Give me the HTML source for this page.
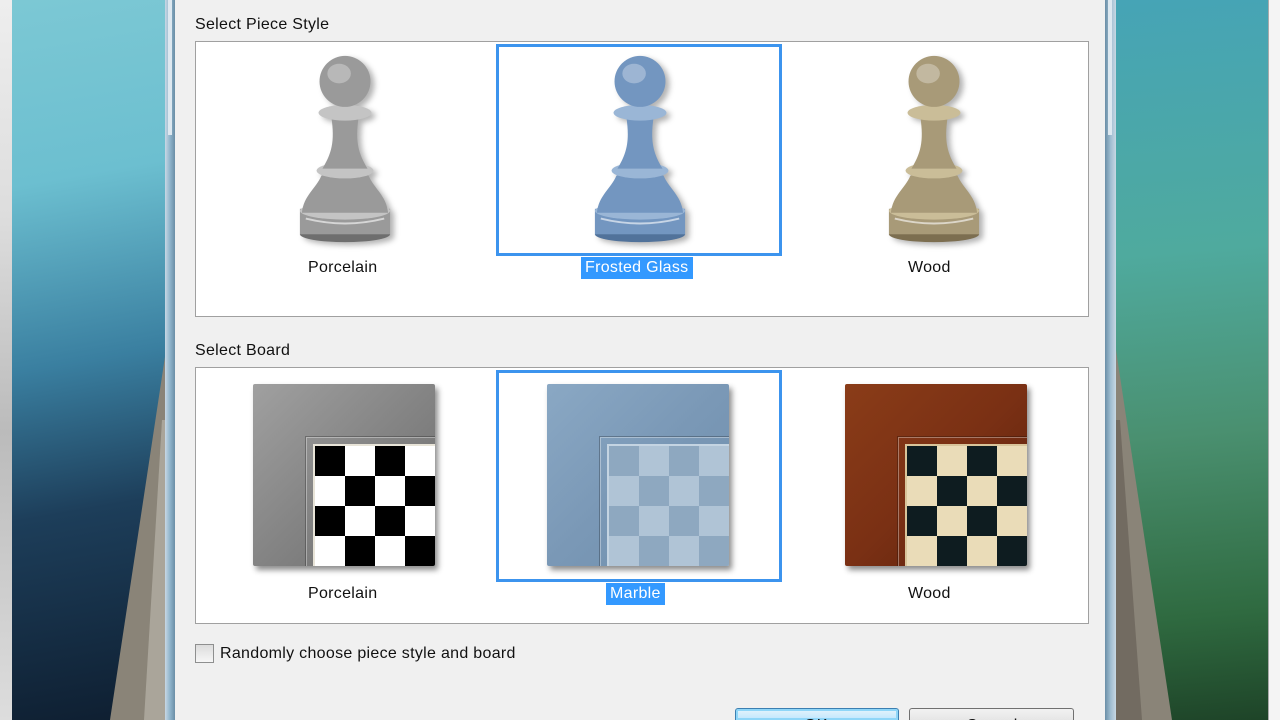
<!DOCTYPE html>
<html style="width:1280px;height:720px;overflow:hidden"><head><meta charset="utf-8"><style>
*{margin:0;padding:0;box-sizing:border-box}
body{width:1280px;height:720px;overflow:hidden;position:relative;background:#f0f0f0;font-family:"Liberation Sans",sans-serif;font-size:16px;color:#000}
.abs{position:absolute}
.lbl{position:absolute;font-size:16px;line-height:22px;white-space:nowrap;color:#111;letter-spacing:.3px}
.panel{position:absolute;left:195px;width:894px;background:#fff;border:1px solid #a0a0a0}
.sel{position:absolute;border:3px solid #3c94ee}
.hl{background:#3399ff;color:#fff;padding:0 4px}
.board{position:absolute;width:182px;height:182px;box-shadow:3px 4px 6px rgba(0,0,0,.45);border-radius:2px;overflow:hidden}
.frm{position:absolute;left:52px;top:52px;width:140px;height:140px;border:1px solid rgba(0,0,0,.25);box-shadow:inset 1px 1px 0 rgba(255,255,255,.35)}
.chk{position:absolute;left:60px;top:60px;width:124px;height:124px;display:grid;grid-template-columns:repeat(4,30px);grid-template-rows:repeat(4,30px);padding:2px 0 0 2px}
</style></head><body>
<div class="abs" style="left:0;top:0;width:12px;height:720px;background:linear-gradient(#eee,#ddd 30%,#bbb 60%,#ddd)"></div>
<div class="abs" style="left:12px;top:0;width:153px;height:720px;background:linear-gradient(170deg,#7cc8d4 0%,#6cbfd0 25%,#3a7fa0 50%,#1d3e5a 70%,#0e1e30 100%)"></div>
<svg class="abs" style="left:100px;top:340px" width="66" height="380"><polygon points="66,10 66,380 10,380" fill="#8a8478"/><polygon points="62,80 66,80 66,380 44,380" fill="#b8b4a8" opacity=".7"/></svg>
<div class="abs" style="left:165px;top:0;width:10px;height:720px;background:linear-gradient(90deg,#c8d8e4,#8fb4cc 50%,#6a8ea6);"></div>
<div class="abs" style="left:168px;top:0;width:4px;height:135px;background:#dde8f0"></div>
<div class="abs" style="left:1105px;top:0;width:11px;height:720px;background:linear-gradient(90deg,#6a8ea6,#9ebcd0 50%,#c8d8e4)"></div>
<div class="abs" style="left:1108px;top:0;width:4px;height:135px;background:#dde8f0"></div>
<div class="abs" style="left:1116px;top:0;width:152px;height:720px;background:linear-gradient(175deg,#46a4b6 0%,#4faa9e 35%,#4a9070 60%,#2f6a40 85%,#1e4428 100%)"></div>
<svg class="abs" style="left:1116px;top:340px" width="60" height="380"><polygon points="0,10 0,380 56,380" fill="#8a8478"/><polygon points="0,80 4,80 26,380 0,380" fill="#5a524a" opacity=".5"/></svg>
<div class="abs" style="left:1268px;top:0;width:12px;height:720px;background:#f4f4f4;border-left:1px solid #aaa"></div>

<div class="lbl" style="left:195px;top:14px">Select Piece Style</div>
<div class="panel" style="top:41px;height:276px"></div>
<div class="sel" style="left:496px;top:44px;width:286px;height:212px"></div>

<svg width="0" height="0" style="position:absolute"><defs>
<symbol id="pawn" viewBox="0 0 100 200"><g>
<ellipse cx="50" cy="186" rx="46" ry="8" fill="var(--d)"/>
<rect x="4" y="160" width="92" height="26" fill="var(--m)"/>
<ellipse cx="50" cy="162" rx="46" ry="9" fill="var(--l)"/>
<path d="M26,126 C20,140 8,146 6,164 L94,164 C92,146 80,140 74,126 Z" fill="var(--m)"/>
<ellipse cx="50" cy="121" rx="29" ry="8" fill="var(--l)"/>
<path d="M36,66 C40,92 36,104 27,119 L73,119 C64,104 60,92 64,66 Z" fill="var(--m)"/>
<ellipse cx="50" cy="62" rx="27" ry="8" fill="var(--l)"/>
<circle cx="50" cy="30" r="26" fill="var(--m)"/>
<ellipse cx="44" cy="22" rx="12" ry="10" fill="#fff" opacity=".3"/>
<path d="M10,170 Q50,180 90,170" stroke="#fff" stroke-width="2" fill="none" opacity=".6"/>
</g></symbol></defs></svg>
<svg class="abs" style="left:295px;top:52px;--m:#9a9a9a;--l:#c4c4c4;--d:#6e6e6e;filter:drop-shadow(4px 3px 3px rgba(0,0,0,.3))" width="100" height="196"><use href="#pawn"/></svg>
<svg class="abs" style="left:590px;top:52px;--m:#7396c0;--l:#9ab6d6;--d:#51729a;filter:drop-shadow(4px 3px 3px rgba(0,0,0,.3))" width="100" height="196"><use href="#pawn"/></svg>
<svg class="abs" style="left:884px;top:52px;--m:#a89a78;--l:#cabd98;--d:#7c6e50;filter:drop-shadow(4px 3px 3px rgba(0,0,0,.3))" width="100" height="196"><use href="#pawn"/></svg>

<div class="lbl" style="left:308px;top:257px">Porcelain</div>
<div class="lbl hl" style="left:581px;top:257px">Frosted Glass</div>
<div class="lbl" style="left:908px;top:257px">Wood</div>

<div class="lbl" style="left:195px;top:340px">Select Board</div>
<div class="panel" style="top:367px;height:257px"></div>
<div class="sel" style="left:496px;top:370px;width:286px;height:212px"></div>

<div class="board" style="left:253px;top:384px;background:linear-gradient(135deg,#a0a0a0,#848484 50%,#6a6a6a)">
<div class="frm"></div>
<div class="chk" style="background:#e8e4d8">
<i style="background:#000"></i><i style="background:#fff"></i><i style="background:#000"></i><i style="background:#fff"></i>
<i style="background:#fff"></i><i style="background:#000"></i><i style="background:#fff"></i><i style="background:#000"></i>
<i style="background:#000"></i><i style="background:#fff"></i><i style="background:#000"></i><i style="background:#fff"></i>
<i style="background:#fff"></i><i style="background:#000"></i><i style="background:#fff"></i><i style="background:#000"></i>
</div></div>
<div class="board" style="left:547px;top:384px;background:linear-gradient(135deg,#8aa8c4,#7a98b6 50%,#6e8eac)">
<div class="frm"></div>
<div class="chk" style="background:#c4d4e2">
<i style="background:#8ea8c0"></i><i style="background:#b0c4d6"></i><i style="background:#8ea8c0"></i><i style="background:#b0c4d6"></i>
<i style="background:#b0c4d6"></i><i style="background:#8ea8c0"></i><i style="background:#b0c4d6"></i><i style="background:#8ea8c0"></i>
<i style="background:#8ea8c0"></i><i style="background:#b0c4d6"></i><i style="background:#8ea8c0"></i><i style="background:#b0c4d6"></i>
<i style="background:#b0c4d6"></i><i style="background:#8ea8c0"></i><i style="background:#b0c4d6"></i><i style="background:#8ea8c0"></i>
</div></div>
<div class="board" style="left:845px;top:384px;background:linear-gradient(135deg,#8a3c18,#7a3014 50%,#5a200c)">
<div class="frm"></div>
<div class="chk" style="background:#d8c49a">
<i style="background:#0e1c20"></i><i style="background:#eadcb8"></i><i style="background:#0e1c20"></i><i style="background:#eadcb8"></i>
<i style="background:#eadcb8"></i><i style="background:#0e1c20"></i><i style="background:#eadcb8"></i><i style="background:#0e1c20"></i>
<i style="background:#0e1c20"></i><i style="background:#eadcb8"></i><i style="background:#0e1c20"></i><i style="background:#eadcb8"></i>
<i style="background:#eadcb8"></i><i style="background:#0e1c20"></i><i style="background:#eadcb8"></i><i style="background:#0e1c20"></i>
</div></div>

<div class="lbl" style="left:308px;top:583px">Porcelain</div>
<div class="lbl hl" style="left:606px;top:583px">Marble</div>
<div class="lbl" style="left:908px;top:583px">Wood</div>

<div class="abs" style="left:195px;top:644px;width:19px;height:19px;border:1px solid #8e8f8f;background:linear-gradient(#dcdcdc,#f6f6f6)"></div>
<div class="lbl" style="left:220px;top:643px">Randomly choose piece style and board</div>

<div class="abs" style="left:735px;top:708px;width:164px;height:12px;overflow:hidden;border:1px solid #3c7fb1;border-bottom:none;border-radius:3px 3px 0 0;background:linear-gradient(#e6f4fc,#bee6fd);box-shadow:inset 0 0 0 2px #8fd6f8"><div class="lbl" style="left:68px;top:6px">OK</div></div>
<div class="abs" style="left:909px;top:708px;width:165px;height:12px;overflow:hidden;border:1px solid #707070;border-bottom:none;border-radius:3px 3px 0 0;background:linear-gradient(#f2f2f2,#e6e6e6)"><div class="lbl" style="left:56px;top:6px">Cancel</div></div>
</body></html>
